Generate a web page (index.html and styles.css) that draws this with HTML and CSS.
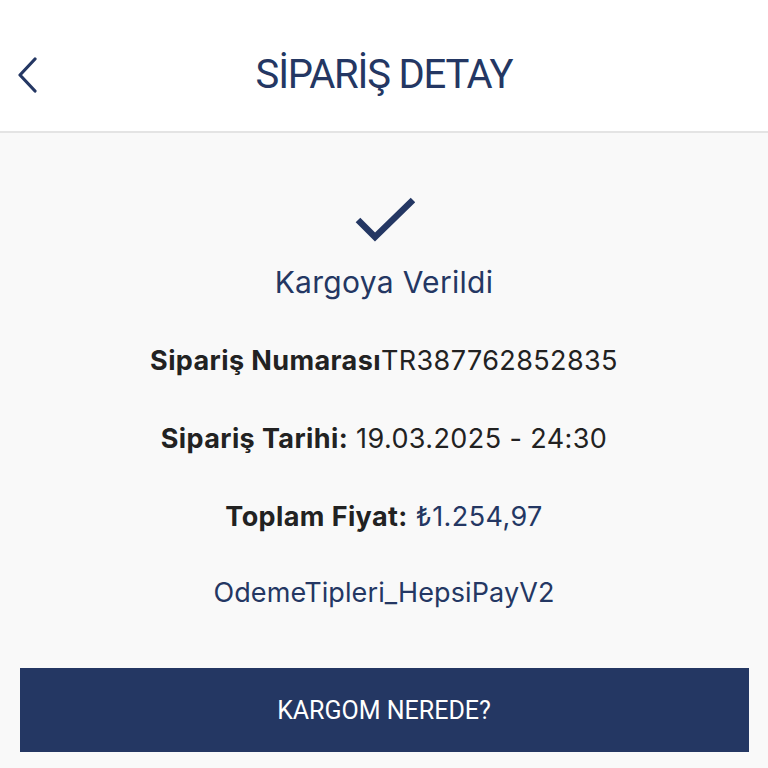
FILE: index.html
```html
<!DOCTYPE html>
<html lang="tr">
<head>
    <meta charset="UTF-8">
    <meta name="viewport" content="width=device-width, initial-scale=1.0">
    <title>Sipariş Detay</title>
    <link rel="stylesheet" href="styles.css">
</head>
<body>
    <div class="header">
        <button class="back">
            <svg width="22" height="36" viewBox="0 0 22 36"><path d="M19 2 L4 18 L19 34" fill="none" stroke="#243763" stroke-width="3.2" stroke-linecap="round" stroke-linejoin="round"/></svg>
        </button>
        <h1>SİPARİŞ DETAY</h1>
    </div>

    <div class="content">
        <div class="status">
            <svg width="62" height="48" viewBox="0 0 62 48"><path d="M5 24 L22 41 L60 4" fill="none" stroke="#243763" stroke-width="6.5"/></svg>
            <div class="status-text">Kargoya Verildi</div>
        </div>

        <div class="row"><b>Sipariş Numarası</b>TR387762852835</div>
        <div class="row"><b>Sipariş Tarihi:</b> 19.03.2025 - 24:30</div>
        <div class="row"><b>Toplam Fiyat:</b> <span class="navy">₺1.254,97</span></div>
        <div class="row navy pay">OdemeTipleri_HepsiPayV2</div>

        <button class="track">KARGOM NEREDE?</button>
    </div>
</body>
</html>
```

FILE: styles.css
```css
body {
    margin: 0;
    background: #f9f9f9;
    font-family: 'Inter', 'Noto Sans', sans-serif;
    color: #222;
}

.header {
    position: relative;
    height: 113px;
    padding-top: 18px;
    background: #fff;
    border-bottom: 2px solid #e4e4e4;
    display: flex;
    align-items: center;
    justify-content: center;
}

.back {
    position: absolute;
    left: 16px;
    top: 57px;
    padding: 0;
    border: none;
    background: none;
}

.header h1 {
    margin: 0;
    font-family: 'Roboto', sans-serif;
    font-weight: 400;
    font-size: 40px;
    letter-spacing: -1.2px;
    color: #243763;
}

.content {
    display: flex;
    flex-direction: column;
    align-items: center;
    padding-top: 63px;
}

.status {
    display: flex;
    flex-direction: column;
    align-items: center;
}

.status-text {
    margin-top: 20px;
    font-size: 30px;
    line-height: 36px;
    letter-spacing: 0.3px;
    color: #243763;
}

.row {
    margin-top: 40px;
    font-size: 27px;
    line-height: 38px;
    letter-spacing: 0.4px;
}

.row b {
    font-weight: 700;
}

.status + .row {
    margin-top: 42px;
}

.pay {
    margin-top: 38px;
    letter-spacing: 0.1px;
}

.navy {
    color: #243763;
}

.track {
    margin-top: 56px;
    width: 729px;
    height: 84px;
    border: none;
    background: #243763;
    color: #fff;
    font-family: 'Roboto', sans-serif;
    font-size: 25px;
}
```
